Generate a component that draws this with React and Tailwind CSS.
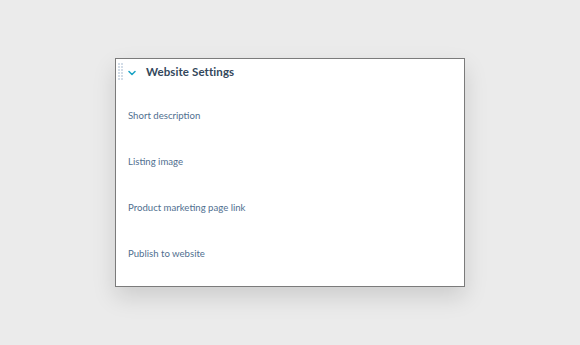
import React from 'react';

const fields = [
  'Short description',
  'Listing image',
  'Product marketing page link',
  'Publish to website',
];

function DragHandle() {
  // two columns of tiny dots
  return (
    <div className="grid grid-cols-2 gap-x-[1px] gap-y-[1px]">
      {Array.from({ length: 12 }).map((_, i) => (
        <span key={i} className="block w-[2px] h-[2px] bg-[#d3dde8]" />
      ))}
    </div>
  );
}

export default function App() {
  return (
    <div
      className="flex items-center justify-center min-h-screen bg-[#ebebeb]"
      style={{ fontFamily: 'Lato, "Noto Sans", sans-serif' }}
    >
      <div className="w-[350px] h-[229px] bg-white border border-[#7b7b7b] shadow-[0_10px_22px_rgba(0,0,0,0.13)]">
        {/* Header */}
        <div className="flex items-center h-[25px] pl-[2px]">
          <DragHandle />
          <svg className="ml-[5px] mt-[2px]" width="8" height="6" viewBox="0 0 8 6" fill="none">
            <path d="M1 1.5 L4 4.5 L7 1.5" stroke="#1aa3c4" strokeWidth="1.5" strokeLinecap="round" strokeLinejoin="round" />
          </svg>
          <h2 className="ml-[10px] text-[11.5px] font-bold text-[#33475b] tracking-[0.1px]">
            Website Settings
          </h2>
        </div>

        {/* Fields */}
        <div className="pt-[9px] pb-[9px] px-[12px]">
          {fields.map((f) => (
            <div key={f} className="h-[46px] flex items-center">
              <span className="text-[9.6px] text-[#516f90]">{f}</span>
            </div>
          ))}
        </div>
      </div>
    </div>
  );
}
